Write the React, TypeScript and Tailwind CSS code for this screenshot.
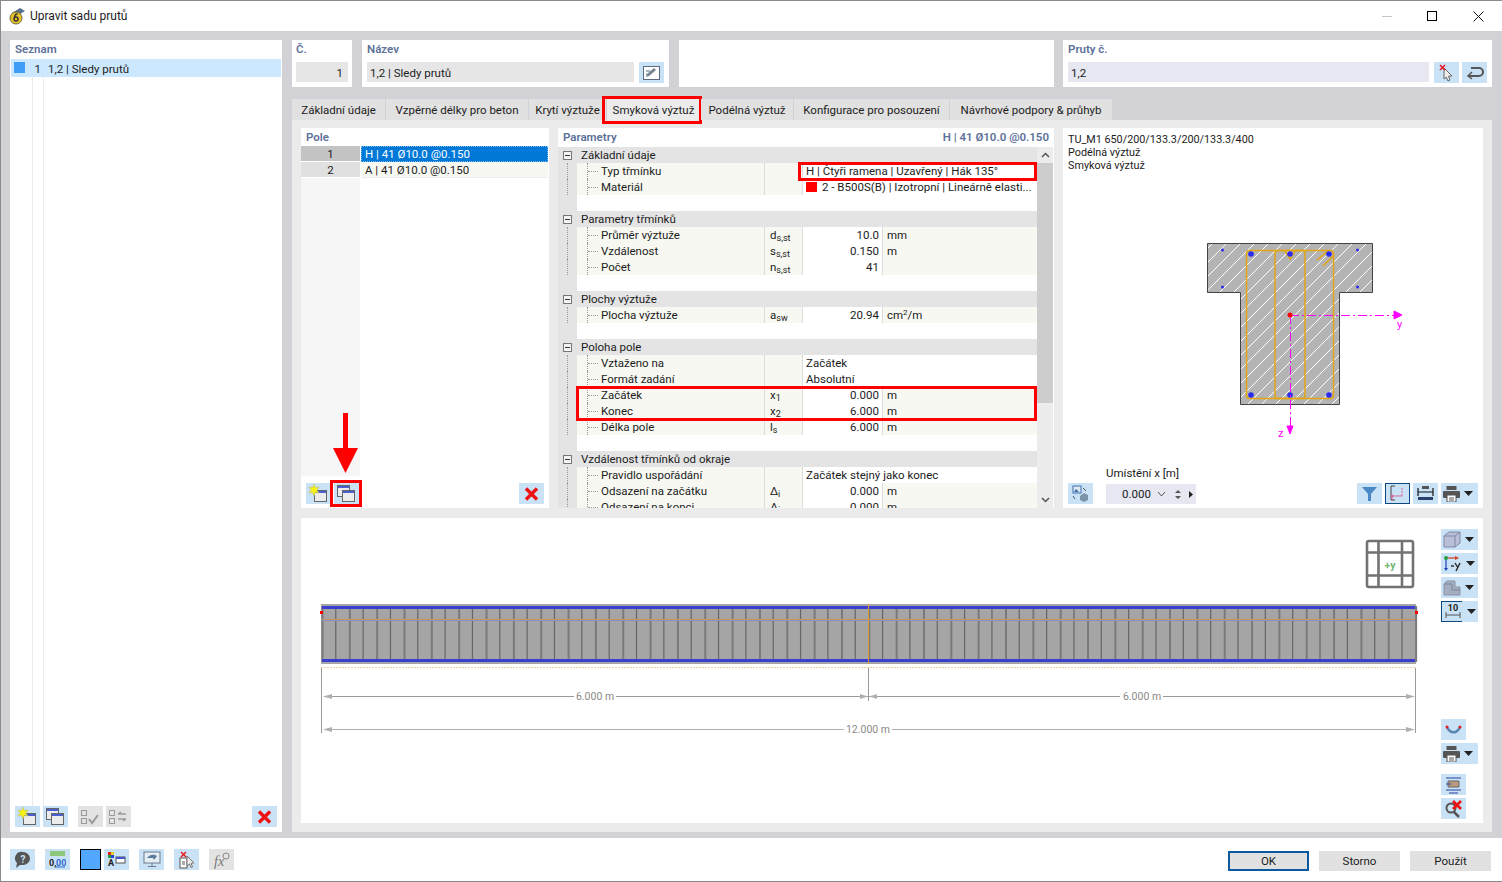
import type { ReactNode } from "react"

const Caret = () => (
  <svg width="9" height="5" viewBox="0 0 9 5" className="shrink-0"><path d="M0 0h9L4.5 5z" fill="#222" /></svg>
)

function Btn({ children, caret, gray, active }: { children: ReactNode; caret?: boolean; gray?: boolean; active?: boolean }) {
  return (
    <div className={`h-[21px] flex items-center shrink-0 ${caret ? "w-[37px] pl-[2px] gap-[4px]" : "w-[25px] justify-center"} ${gray ? "bg-[#e3e3e3]" : "bg-[#c9e2f6]"} ${active ? "border border-[#0c4a80]" : ""}`}>
      {children}
    </div>
  )
}

const Win = ({ x, y, w = 11, h = 11 }: { x: number; y: number; w?: number; h?: number }) => (
  <g>
    <rect x={x} y={y} width={w} height={h} fill="#ececec" stroke="#666" />
    <rect x={x + 0.5} y={y + 0.5} width={w - 1} height="2" fill="#4a5fd0" />
  </g>
)
const NewWinIcon = () => (
  <svg width="21" height="19" viewBox="0 0 21 19">
    <Win x={6.5} y={6.5} w={12} h={11} />
    <path d="M6 0l1.400 3.600L11 3l-2.200 3L11 9 7.400 8.400 6 12 4.600 8.400 1 9l2.200-3L1 3l3.600.6z" fill="#f7f215" stroke="#b9b66a" strokeWidth=".5" />
  </svg>
)
const CopyWinIcon = () => (
  <svg width="21" height="19" viewBox="0 0 21 19">
    <Win x={1.5} y={1.5} w={12} h={11} />
    <Win x={6.5} y={6.5} w={12} h={11} />
  </svg>
)
const XIcon = () => (
  <svg width="15" height="14" viewBox="0 0 15 14"><path d="M2 1.500l11 11M13 1.500l-11 11" stroke="#ee1111" strokeWidth="3.400" /></svg>
)
const CheckIcon = ({ swap }: { swap?: boolean }) => (
  <svg width="21" height="18" viewBox="0 0 21 18" fill="none" stroke="#9a9a9a">
    <rect x="1.500" y="2.500" width="5" height="5" />
    <rect x="1.500" y="10.500" width="5" height="5" />
    {swap ? <path d="M10 6h8M10 6l3-2M18 11h-8M18 11l-3 2" strokeWidth="1.500" /> : <path d="M9 11l3 4 6-8" strokeWidth="2" />}
  </svg>
)
const PencilIcon = () => (
  <svg width="19" height="16" viewBox="0 0 19 16">
    <rect x="1.500" y="1.500" width="16" height="13" fill="#fff" stroke="#5a6a80" />
    <path d="M4 12l1-3 7-6 2 2-7 6z" fill="#75828f" />
    <path d="M4 6h4M4 9h1" stroke="#5a6a80" />
  </svg>
)
const PickIcon = () => (
  <svg width="15" height="18" viewBox="0 0 15 18">
    <path d="M5 4l8 8-3.500.3L11 16l-2 1-1.700-3.800L5 15z" fill="#eee" stroke="#666" />
    <path d="M1 1l5 5M6 1L1 6" stroke="#ee1122" strokeWidth="1.500" />
  </svg>
)
const ReturnIcon = () => (
  <svg width="18" height="14" viewBox="0 0 18 14" fill="none" stroke="#555" strokeWidth="2">
    <path d="M3 10h10a3.500 3.500 0 000-8H5" />
    <path d="M6 6l-4 4 4 3" strokeWidth="1.500" />
  </svg>
)
const PrintIcon = () => (
  <svg width="17" height="16" viewBox="0 0 17 16">
    <rect x="3.500" y="0" width="10" height="4" fill="#555" />
    <rect x="0" y="5" width="17" height="7" rx="1" fill="#555" />
    <rect x="4" y="9" width="9" height="7" fill="#fff" stroke="#555" />
    <path d="M6 12h5M6 14h5" stroke="#555" />
  </svg>
)

type Row = { name: string; sym?: string; sub?: string; value?: string; unit?: ReactNode; text?: string; swatch?: boolean }
type Group = { title: string; rows: Row[] }

const groups: Group[] = [
  {
    title: "Základní údaje",
    rows: [
      { name: "Typ třmínku", text: "H | Čtyři ramena | Uzavřený | Hák 135°" },
      { name: "Materiál", text: "2 - B500S(B) | Izotropní | Lineárně elasti...", swatch: true },
    ],
  },
  {
    title: "Parametry třmínků",
    rows: [
      { name: "Průměr výztuže", sym: "d", sub: "s,st", value: "10.0", unit: "mm" },
      { name: "Vzdálenost", sym: "s", sub: "s,st", value: "0.150", unit: "m" },
      { name: "Počet", sym: "n", sub: "s,st", value: "41" },
    ],
  },
  {
    title: "Plochy výztuže",
    rows: [{ name: "Plocha výztuže", sym: "a", sub: "sw", value: "20.94", unit: <>cm<sup className="text-[8px]">2</sup>/m</> }],
  },
  {
    title: "Poloha pole",
    rows: [
      { name: "Vztaženo na", text: "Začátek" },
      { name: "Formát zadání", text: "Absolutní" },
      { name: "Začátek", sym: "x", sub: "1", value: "0.000", unit: "m" },
      { name: "Konec", sym: "x", sub: "2", value: "6.000", unit: "m" },
      { name: "Délka pole", sym: "l", sub: "s", value: "6.000", unit: "m" },
    ],
  },
  {
    title: "Vzdálenost třmínků od okraje",
    rows: [
      { name: "Pravidlo uspořádání", text: "Začátek stejný jako konec" },
      { name: "Odsazení na začátku", sym: "Δ", sub: "i", value: "0.000", unit: "m" },
      { name: "Odsazení na konci", sym: "Δ", sub: "j", value: "0.000", unit: "m" },
    ],
  },
]

function ParamRow({ row }: { row: Row }) {
  return (
    <div className="flex h-4 leading-4">
      <div className="w-[19px] bg-[#e4e4e4] shrink-0 flex justify-start pl-[9px]">
        <div className="border-l border-dotted border-[#999] h-full" />
      </div>
      <div className="w-[187px] shrink-0 bg-[#f7f8f2] flex items-center pl-[10px]">
        <div className="w-[14px] h-full flex items-center border-l border-dotted border-[#999]">
          <div className="w-[10px] border-t border-dotted border-[#999]" />
        </div>
        {row.name}
      </div>
      <div className="w-[38px] shrink-0 bg-[#f7f8f2] border-l border-[#dcdcdc] pl-[5px]">
        {row.sym}
        {row.sub && <span className="text-[9px] relative top-[2px]">{row.sub}</span>}
      </div>
      {row.text ? (
        <div className="flex-1 bg-white border-l border-[#dcdcdc] pl-[3px] flex items-center whitespace-nowrap">
          {row.swatch && <span className="w-[11px] h-[10px] bg-[#ff0000] mr-[5px] shrink-0" />}
          {row.text}
        </div>
      ) : (
        <>
          <div className="w-[80px] shrink-0 bg-white border-l border-[#dcdcdc] text-right pr-[3px]">{row.value}</div>
          <div className="flex-1 bg-[#f7f8f2] border-l border-[#dcdcdc] pl-[4px]">{row.unit}</div>
        </>
      )}
    </div>
  )
}

function Expander() {
  return (
    <div className="w-[19px] shrink-0 flex items-center pl-[5px]">
      <div className="w-[9px] h-[9px] border border-[#777] bg-[#f4f4f4] flex items-center justify-center">
        <div className="w-[5px] h-px bg-[#333]" />
      </div>
    </div>
  )
}

function ParamTable() {
  return (
    <div className="relative flex-1 overflow-hidden">
      {groups.map((g, i) => (
        <div key={g.title}>
          <div className="flex h-4 leading-4 bg-[#e4e4e4]">
            <Expander />
            <div className="pl-[4px]">{g.title}</div>
          </div>
          {g.rows.map((r) => (
            <ParamRow key={r.name} row={r} />
          ))}
          {i < groups.length - 1 && (
            <div className="flex h-4">
              <div className="w-[19px] bg-[#e4e4e4]" />
            </div>
          )}
        </div>
      ))}
      <div className="absolute left-[240px] top-[15px] w-[239px] h-[19px] border-[3px] border-[#ff0000]" />
      <div className="absolute left-[18px] top-[239px] w-[461px] h-[35px] border-[3px] border-[#ff0000]" />
    </div>
  )
}

function Label({ children }: { children: ReactNode }) {
  return <div className="font-semibold text-[#5d7199] leading-4">{children}</div>
}

const tabs = [
  { label: "Základní údaje", w: "w-[93px]" },
  { label: "Vzpěrné délky pro beton", w: "w-[142px]" },
  { label: "Krytí výztuže", w: "w-[77px]" },
  { label: "Smyková výztuž", w: "w-[93px]", active: true },
  { label: "Podélná výztuž", w: "w-[92px]" },
  { label: "Konfigurace pro posouzení", w: "w-[155px]" },
  { label: "Návrhové podpory & průhyb", w: "w-[162px]" },
]

function SectionDrawing() {
  return (
    <svg width="230" height="210" viewBox="1190 235 230 210" className="absolute left-[127px] top-[107px]">
      <defs>
        <pattern id="hatch" width="14" height="14" patternUnits="userSpaceOnUse">
          <rect width="14" height="14" fill="#b4b4b4" />
          <path d="M-2 16L16 -2M-9 9L9 -9M5 23L23 5" stroke="#fff" strokeWidth="1" />
        </pattern>
      </defs>
      <path d="M1207.500 243.500h165v49h-33v112h-99v-112h-33z" fill="url(#hatch)" stroke="#444" />
      <g fill="none" stroke="#e2a512" strokeWidth="1.500">
        <rect x="1246.500" y="250.500" width="87" height="148" rx="3" />
        <rect x="1275" y="250.500" width="30" height="148" rx="3" />
        <path d="M1317 260l11-9M1323 266l10-10M1285 251l5 8 5-8" />
      </g>
      <g fill="#2b2bf0">
        <circle cx="1251" cy="254" r="2.800" />
        <circle cx="1290" cy="254" r="2.800" />
        <circle cx="1329" cy="254" r="2.800" />
        <circle cx="1251" cy="395" r="2.800" />
        <circle cx="1290" cy="395" r="2.800" />
        <circle cx="1329" cy="395" r="2.800" />
        <circle cx="1222.500" cy="250" r="1.500" />
        <circle cx="1357.500" cy="250" r="1.500" />
        <circle cx="1222.500" cy="287" r="1.500" />
        <circle cx="1357.500" cy="287" r="1.500" />
      </g>
      <g stroke="#ff00ff" fill="#ff00ff">
        <path d="M1290 315.500h104M1290.500 315v113" strokeDasharray="9 3 2 3" fill="none" />
        <path d="M1394 311l8 4-8 4z" />
        <path d="M1287 426h6l-3 8z" />
      </g>
      <circle cx="1290" cy="315" r="2.500" fill="#ff0000" />
      <text x="1397" y="328" fontSize="11" fill="#ff00ff">y</text>
      <text x="1278" y="437" fontSize="11" fill="#ff00ff">z</text>
    </svg>
  )
}

function BeamDrawing() {
  const stirrups = Array.from({ length: 81 }, (_, i) => 321.500 + i * 13.67)
  const sep = 868
  return (
    <svg width="1140" height="305" viewBox="301 518 1140 305" className="shrink-0">
      <rect x="321" y="604" width="1095" height="60" fill="#a5a5a5" />
      {stirrups.map((x, i) => (
        <rect key={x} x={x} y="606" width={i % 2 ? 1.200 : 2} height="56" fill={i % 2 ? "#666" : "#7a7a7a"} />
      ))}
      <rect x="322" y="606" width="1093" height="3" fill="#3a3fd0" />
      <rect x="322" y="659" width="1093" height="3" fill="#3a3fd0" />
      <rect x="322" y="619" width="1093" height="1" fill="#c69a55" />
      <rect x="322" y="620" width="1093" height="1" fill="#8a8ad0" />
      <rect x={sep} y="604" width="1" height="60" fill="#d69a30" />
      <path d="M321 667.500h1095" stroke="#f2cfa0" strokeDasharray="2 1" />
      <rect x="320" y="611" width="3" height="3" fill="#ff0000" />
      <rect x="1415" y="611" width="3" height="3" fill="#ff0000" />
      <g stroke="#9a9a9a" fill="none">
        <path d="M321.500 668v65M868.500 668v33M1415.500 668v65" />
        <path d="M324 696.500h250M616 696.500h504M1163 696.500h250" />
        <path d="M324 729.500h520M892 729.500h521" stroke="#b0b0b0" />
      </g>
      <g fill="#b0b0b0">
        <path d="M323 696.500l9-2.500v5zM868 696.500l-8-2.500v5zM869 696.500l8-2.500v5zM1415 696.500l-9-2.500v5z" />
        <path d="M323 729.500l9-2.500v5zM1415 729.500l-9-2.500v5z" />
      </g>
      <g fontSize="10.500" fill="#8a8a8a" textAnchor="middle">
        <text x="595" y="700">6.000 m</text>
        <text x="1142" y="700">6.000 m</text>
        <text x="868" y="733">12.000 m</text>
      </g>
      <g fill="none" stroke="#727272" strokeWidth="2.600">
        <rect x="1367" y="541" width="46" height="46" rx="2" />
        <path d="M1378.500 541v46M1402 541v46M1367 552.500h46M1367 575.500h46" />
      </g>
      <text x="1390" y="569" fontSize="10.500" fontWeight="700" fill="#72b872" textAnchor="middle">+y</text>
    </svg>
  )
}

function App() {
  return (
    <div className="w-[1502px] h-[882px] flex flex-col bg-white border-l border-t border-b border-[#8a8a8a] overflow-hidden text-[11.500px] text-[#1c1c1c] font-['Roboto','Noto_Sans',sans-serif]">
      {/* title bar */}
      <div className="h-[30px] flex items-center pl-[8px] shrink-0">
        <svg width="17" height="18" viewBox="0 0 17 18" className="mr-[4px]">
          <path d="M3 6l8-5 5 3-8 5z" fill="#59708f" />
          <circle cx="7" cy="11" r="6" fill="#e9c32c" stroke="#6b6b35" />
          <circle cx="7" cy="12" r="2" fill="none" stroke="#333" strokeWidth="1.500" />
          <path d="M5.500 11c0-3 1-4 3-4" fill="none" stroke="#333" strokeWidth="1.500" />
        </svg>
        <span className="text-[12px]">Upravit sadu prutů</span>
        <div className="ml-auto flex items-center">
          <div className="w-[10px] h-px bg-[#c8c8c8] mr-[35px]" />
          <div className="w-[10px] h-[10px] border border-black mr-[36px]" />
          <svg width="11" height="11" viewBox="0 0 11 11" className="mr-[18px]"><path d="M.5.500l10 10M10.500.500l-10 10" stroke="#111" /></svg>
        </div>
      </div>

      {/* main */}
      <div className="flex-1 bg-[#d2d1d5] flex gap-[10px] pl-[9px] pr-[10px] pt-[9px] pb-[6px] min-h-0">
        {/* list */}
        <div className="w-[272px] shrink-0 bg-white flex flex-col px-[1px]">
          <div className="h-[19px] pl-[4px] pt-[1px]"><Label>Seznam</Label></div>
          <div className="h-[18px] bg-[#cce8ff] flex items-center leading-[18px]">
            <span className="w-[11px] h-[11px] bg-[#3f9df5] ml-[3px] mb-[2px]" />
            <span className="w-[16px] text-right mr-[7px] pt-[2px]">1</span>
            <span className="pt-[2px]">1,2 | Sledy prutů</span>
          </div>
          <div className="flex-1 flex pl-[21px]">
            <div className="w-[12px] border-l border-r border-[#ececec]" />
          </div>
          <div className="h-[26px] flex items-start pl-[4px] pr-[4px] gap-[3px]">
            <Btn><NewWinIcon /></Btn>
            <Btn><CopyWinIcon /></Btn>
            <div className="ml-[7px]"><Btn gray><CheckIcon /></Btn></div>
            <Btn gray><CheckIcon swap /></Btn>
            <div className="ml-auto"><Btn><XIcon /></Btn></div>
          </div>
        </div>

        {/* right side */}
        <div className="flex-1 flex flex-col min-w-0">
          <div className="h-[47px] flex gap-[10px] shrink-0">
            <div className="w-[60px] bg-white px-[4px] pt-[1px]">
              <Label>Č.</Label>
              <div className="h-[20px] mt-[5px] bg-[#e6e6e6] text-right pr-[5px] leading-[22px]">1</div>
            </div>
            <div className="w-[307px] bg-white px-[5px] pt-[1px]">
              <Label>Název</Label>
              <div className="flex gap-[5px] mt-[5px]">
                <div className="flex-1 h-[20px] bg-[#e6e6e6] pl-[3px] leading-[22px]">1,2 | Sledy prutů</div>
                <Btn><PencilIcon /></Btn>
              </div>
            </div>
            <div className="w-[375px] bg-white" />
            <div className="ml-[-1px] flex-1 bg-white px-[5px] pt-[1px]">
              <Label>Pruty č.</Label>
              <div className="flex gap-[3px] mt-[5px]">
                <div className="flex-1 h-[20px] bg-[#e6e7f0] pl-[3px] leading-[22px] mr-[2px]">1,2</div>
                <Btn><PickIcon /></Btn>
                <Btn><ReturnIcon /></Btn>
              </div>
            </div>
          </div>

          {/* tabs */}
          <div className="h-[21px] mt-[12px] flex shrink-0 gap-px">
            {tabs.map((t) => (
              <div key={t.label} className={`relative ${t.w} text-center leading-[23px] whitespace-nowrap ${t.active ? "bg-[#ebebeb]" : "bg-[#e1e1e1]"}`}>
                {t.label}
                {t.active && <div className="absolute -left-[5px] -right-[2px] -top-[3px] -bottom-[4px] border-[3px] border-[#ff0000]" />}
              </div>
            ))}
          </div>

          {/* tab body */}
          <div className="flex-1 bg-[#ebebeb] px-[9px] pt-[8px] pb-[9px] flex flex-col gap-[10px] min-h-0">
            <div className="h-[380px] flex gap-[9px] shrink-0">
              {/* pole */}
              <div className="relative w-[248px] bg-white flex flex-col">
                <div className="h-[18px] pl-[5px] pt-[1px]"><Label>Pole</Label></div>
                <div className="h-[330px] flex">
                  <div className="w-[59px] bg-[#f6f6f6] text-center">
                    <div className="h-[16px] bg-[#c4c4c4] leading-4 border-b border-white">1</div>
                    <div className="h-[16px] bg-[#e0e0e0] leading-4 border-b border-white">2</div>
                  </div>
                  <div className="flex-1 ml-[1px] mr-[1px]">
                    <div className="h-[16px] bg-[#0078d7] text-white leading-4 pl-[4px] outline-1 outline-dotted -outline-offset-1 outline-[#7fb8e8]">H | 41 Ø10.0 @0.150</div>
                    <div className="h-[16px] bg-[#f7f8f2] leading-4 pl-[4px] border-b border-[#eeeeee]">A | 41 Ø10.0 @0.150</div>
                  </div>
                </div>
                <div className="flex items-start pt-[7px] pl-[5px] pr-[5px] gap-[3px]">
                  <Btn><NewWinIcon /></Btn>
                  <div className="relative">
                    <Btn><CopyWinIcon /></Btn>
                    <div className="absolute -left-[4px] -top-[3px] w-[32px] h-[27px] border-[3px] border-[#ff0000]" />
                    <svg width="26" height="60" viewBox="0 0 26 60" className="absolute -left-[1px] -top-[70px]">
                      <path d="M10 0h5v35h10L12.500 60 0 35h10z" fill="#ff0000" />
                    </svg>
                  </div>
                  <div className="ml-auto"><Btn><XIcon /></Btn></div>
                </div>
              </div>

              {/* parameters */}
              <div className="w-[496px] bg-white flex flex-col">
                <div className="h-[19px] flex justify-between items-start pt-[1px] pl-[5px] pr-[5px]">
                  <Label>Parametry</Label>
                  <Label>H | 41 Ø10.0 @0.150</Label>
                </div>
                <div className="flex-1 flex min-h-0">
                  <ParamTable />
                  <div className="w-[16px] shrink-0 bg-[#ececec] flex flex-col mr-[1px]">
                    <div className="h-[16px] flex items-center justify-center">
                      <svg width="9" height="6" viewBox="0 0 9 6"><path d="M1 5l3.500-3.500L8 5" fill="none" stroke="#555" strokeWidth="1.500" /></svg>
                    </div>
                    <div className="h-[240px] bg-[#cdcdcd]" />
                    <div className="mt-auto h-[16px] flex items-center justify-center">
                      <svg width="9" height="6" viewBox="0 0 9 6"><path d="M1 1l3.500 3.500L8 1" fill="none" stroke="#555" strokeWidth="1.500" /></svg>
                    </div>
                  </div>
                </div>
              </div>

              {/* preview */}
              <div className="relative w-[420px] bg-white flex flex-col pl-[5px]">
                <div className="pt-[5px] leading-[13px] text-[10.800px]">
                  <div>TU_M1 650/200/133.3/200/133.3/400</div>
                  <div>Podélná výztuž</div>
                  <div>Smyková výztuž</div>
                </div>
                <SectionDrawing />
                <div className="mt-auto flex items-end pb-[4px] gap-[13px]">
                  <Btn>
                    <svg width="17" height="17" viewBox="0 0 17 17">
                      <rect x="1" y="1" width="8" height="7" fill="#dfe8f2" stroke="#3d6fa8" />
                      <path d="M2 7l2-3 3 3z" fill="#3d6fa8" />
                      <path d="M11 3l3 3M1 11l2 3" stroke="#555" fill="none" />
                      <path d="M8 11l4-3 4 2v5l-4 2-4-2z" fill="#7d93a8" />
                    </svg>
                  </Btn>
                  <div>
                    <div className="leading-[14px] mb-[4px]">Umístění x [m]</div>
                    <div className="w-[90px] h-[20px] bg-[#e6e7f0] flex items-center pl-[16px]">
                      <span className="pt-[2px]">0.000</span>
                      <svg width="9" height="6" viewBox="0 0 9 6" className="ml-[6px]"><path d="M1 1l3.500 4L8 1" fill="none" stroke="#555" /></svg>
                      <svg width="6" height="11" viewBox="0 0 6 11" className="ml-[9px]"><path d="M0 4l3-3 3 3zM0 7l3 3 3-3z" fill="#555" /></svg>
                      <svg width="4" height="7" viewBox="0 0 4 7" className="ml-[8px]"><path d="M0 0l4 3.500L0 7z" fill="#222" /></svg>
                    </div>
                  </div>
                  <div className="ml-auto flex gap-[3px] mr-[5px]">
                    <Btn>
                      <svg width="15" height="15" viewBox="0 0 15 15"><path d="M0 1h15L9 8v7H6V8z" fill="#4a8ac4" /></svg>
                    </Btn>
                    <Btn active>
                      <svg width="17" height="17" viewBox="0 0 17 17" fill="none"><path d="M6 1H2v14h4" stroke="#444" /><path d="M3 11h10M3 11v5" stroke="#d66a9a" /><circle cx="3" cy="11" r="1.500" fill="#d66a9a" /><path d="M13 3v8" stroke="#d66a9a" strokeDasharray="2 1" /></svg>
                    </Btn>
                    <Btn>
                      <svg width="17" height="15" viewBox="0 0 17 15"><path d="M1 2v8M16 2v8M1 6h15" stroke="#111" strokeWidth="1.200" /><rect x="1" y="11" width="15" height="3" fill="#2a3f6a" /><rect x="5" y="0" width="7" height="3" fill="#555" /></svg>
                    </Btn>
                    <Btn caret><PrintIcon /><Caret /></Btn>
                  </div>
                </div>
              </div>
            </div>

            {/* beam view */}
            <div className="flex-1 bg-white flex min-h-0">
              <BeamDrawing />
              <div className="flex flex-col gap-[3px] pt-[11px]">
                <Btn caret>
                  <svg width="18" height="17" viewBox="0 0 18 17"><path d="M1 5l5-4h11v11l-5 4H1z" fill="#b9bfd6" stroke="#8088a8" /><path d="M1 5h11v11M12 5l5-4" fill="none" stroke="#8088a8" /></svg>
                  <Caret />
                </Btn>
                <Btn caret>
                  <svg width="19" height="17" viewBox="0 0 19 17">
                    <path d="M3 3h10" stroke="#d04020" strokeWidth="1.200" />
                    <path d="M3 3v11" stroke="#2040c0" strokeWidth="1.200" />
                    <circle cx="3" cy="3" r="2" fill="#20a040" />
                    <path d="M1 13h4l-2 3z" fill="#2040c0" />
                    <path d="M12 1l4 2-4 2z" fill="#d04020" />
                    <path d="M8 11h3" stroke="#222" strokeWidth="1.400" />
                    <path d="M12 8l2.500 4M17 8l-4 8" stroke="#222" strokeWidth="1.400" fill="none" />
                  </svg>
                  <Caret />
                </Btn>
                <Btn caret>
                  <svg width="18" height="16" viewBox="0 0 18 16"><path d="M1 4l3-3h8v6h5v8H1z" fill="#a5aec0" stroke="#8a94a8" /><path d="M1 4h8v6h8" fill="none" stroke="#7a849a" /></svg>
                  <Caret />
                </Btn>
                <div className="relative">
                  <Btn caret>
                    <svg width="20" height="19" viewBox="0 0 20 19">
                      <text x="10" y="9" fontSize="9" fontWeight="700" fill="#222" textAnchor="middle">10</text>
                      <path d="M3 10v6M17 10v6M3 13h14" stroke="#555" />
                    </svg>
                    <Caret />
                  </Btn>
                  <div className="absolute left-0 top-0 w-[21px] h-[21px] border-l border-t border-b border-[#0c4a80]" />
                </div>
                <div className="mt-[94px]">
                  <Btn>
                    <svg width="19" height="12" viewBox="0 0 19 12"><path d="M3 3c3 7 10 7 13 0" fill="none" stroke="#5a86b0" strokeWidth="2.500" /><circle cx="3" cy="3" r="1.500" fill="#e02020" /><circle cx="16" cy="3" r="1.500" fill="#e02020" /></svg>
                  </Btn>
                </div>
                <Btn caret><PrintIcon /><Caret /></Btn>
                <div className="mt-[7px]">
                  <Btn>
                    <svg width="17" height="18" viewBox="0 0 17 18"><path d="M1 2h15M1 14h15M4 17h9" stroke="#2a3f9a" /><path d="M3 5h11v6H3z" fill="#b99a80" stroke="#666" /><path d="M1 8h5" stroke="#2a3f9a" /></svg>
                  </Btn>
                </div>
                <Btn>
                  <svg width="19" height="18" viewBox="0 0 19 18"><circle cx="7" cy="8" r="4.500" fill="none" stroke="#555" strokeWidth="2" /><path d="M10 12l5 5" stroke="#555" strokeWidth="2.500" /><path d="M9 1l8 8M17 1L9 9" stroke="#ee1111" strokeWidth="2.600" /></svg>
                </Btn>
              </div>
            </div>
          </div>
        </div>
      </div>

      {/* footer */}
      <div className="h-[43px] shrink-0 flex items-center pl-[9px] pr-[11px]">
        <div className="flex items-center">
          <Btn>
            <svg width="17" height="17" viewBox="0 0 17 17"><path d="M9 1a7 6.500 0 110 13H6l-4 3 1-5A6.500 6.500 0 019 1z" fill="#555" /><text x="9" y="11.500" fontSize="10" fontWeight="700" fill="#c9e2f6" textAnchor="middle">?</text></svg>
          </Btn>
          <div className="ml-[10px]">
            <Btn>
              <svg width="17" height="17" viewBox="0 0 17 17"><rect x="1" y="0" width="15" height="5" fill="#8fc77a" /><text x="0" y="15" fontSize="9" fontWeight="700" fill="#222">0,</text><text x="7" y="15" fontSize="9" fontWeight="700" fill="#2f6bd0">00</text><path d="M7 16h9" stroke="#2f6bd0" /></svg>
            </Btn>
          </div>
          <div className="w-[21px] h-[21px] bg-[#52a8ff] border border-black ml-[10px] mr-[3px]" />
          <Btn>
            <svg width="19" height="17" viewBox="0 0 19 17"><rect x="1" y="1" width="3" height="3" fill="#e02020" /><rect x="4" y="1" width="3" height="3" fill="#e8d020" /><rect x="1" y="4" width="3" height="3" fill="#20a040" /><rect x="4" y="4" width="3" height="3" fill="#2040e0" /><text x="1" y="15" fontSize="9" fontWeight="700" fill="#222">A</text><rect x="9" y="6" width="9" height="6" fill="#fff" stroke="#555" /><rect x="9" y="6" width="9" height="2" fill="#3f55c8" /></svg>
          </Btn>
          <div className="ml-[10px]">
            <Btn>
              <svg width="18" height="17" viewBox="0 0 18 17"><rect x="1" y="1" width="16" height="11" fill="#e6eef5" stroke="#6a7a8a" /><path d="M4 7c3-4 7-4 10-2l-3 4-1-2z" fill="#5a7a9a" /><path d="M9 12v3M5 15.500h8" stroke="#6a7a8a" /></svg>
            </Btn>
          </div>
          <div className="ml-[10px]">
            <Btn>
              <svg width="18" height="18" viewBox="0 0 18 18"><rect x="2" y="7" width="7" height="10" fill="#fff" stroke="#555" /><path d="M4 11h3M4 13h3" stroke="#555" /><path d="M9 5l7 7-3 .3 1.500 3.500-1.500.7-1.500-3.500-2.500 2z" fill="#eee" stroke="#777" /><path d="M3 1l5 5M8 1L3 6" stroke="#ee1111" strokeWidth="1.400" /></svg>
            </Btn>
          </div>
          <div className="ml-[10px]">
            <Btn gray>
              <svg width="18" height="18" viewBox="0 0 18 18"><text x="1" y="15" fontSize="14" fontStyle="italic" fontFamily="Liberation Serif" fill="#777">fx</text><circle cx="13" cy="5" r="3" fill="none" stroke="#888" /></svg>
            </Btn>
          </div>
        </div>
        <div className="ml-auto flex gap-[10px] pt-[3px]">
          <div className="w-[81px] h-[20px] bg-[#e1e1e1] border-2 border-[#0c5a9e] text-center leading-4">OK</div>
          <div className="w-[81px] h-[20px] bg-[#e1e1e1] text-center leading-5">Storno</div>
          <div className="w-[81px] h-[20px] bg-[#e1e1e1] text-center leading-5">Použít</div>
        </div>
      </div>
    </div>
  )
}

export default App
